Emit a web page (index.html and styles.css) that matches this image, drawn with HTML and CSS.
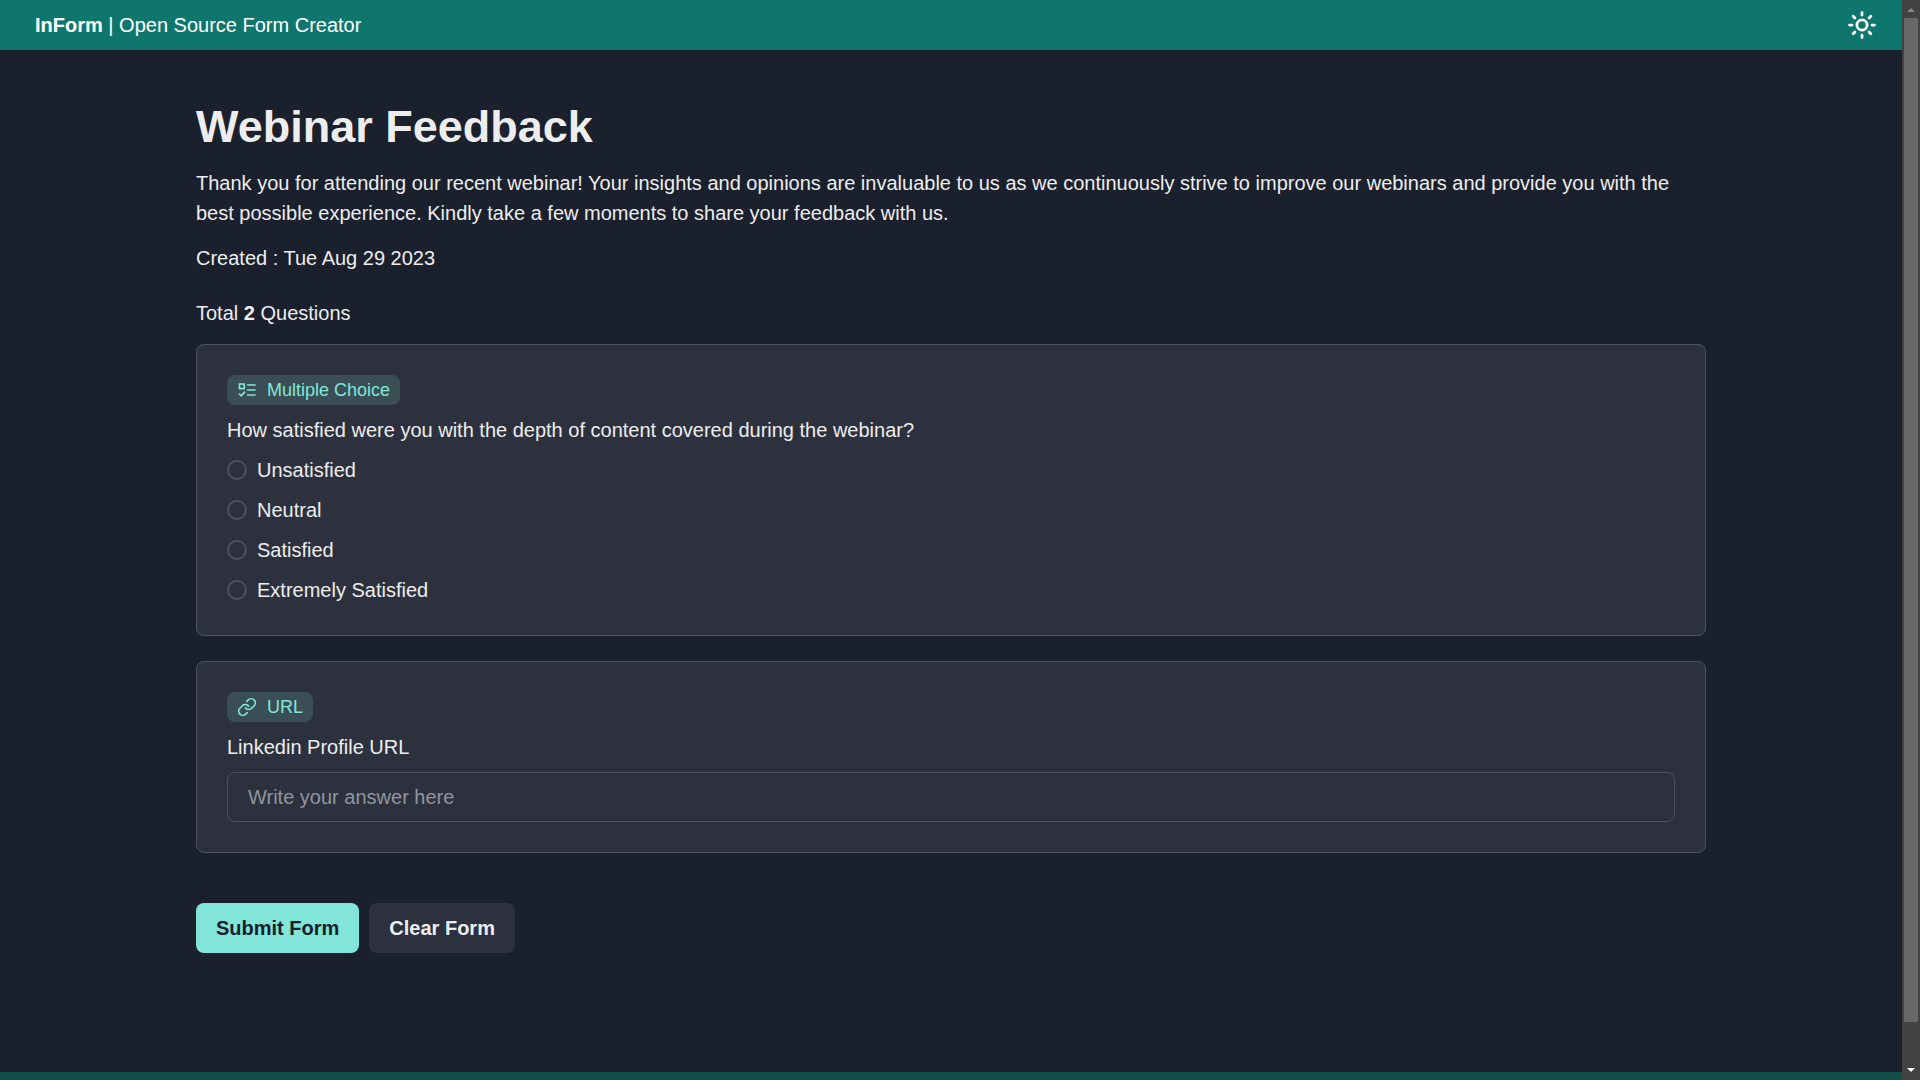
FILE: index.html
```html
<!DOCTYPE html>
<html lang="en">
<head>
<meta charset="utf-8">
<title>Webinar Feedback | InForm</title>
<link rel="stylesheet" href="styles.css">
</head>
<body>
<div class="page">
  <header class="topbar">
    <a class="brand" href="#"><b>InForm</b> | Open Source Form Creator</a>
    <button class="theme-toggle" type="button" aria-label="Toggle color mode">
      <svg viewBox="0 0 24 24" fill="none" stroke="currentColor" stroke-width="2.2" stroke-linecap="round" stroke-linejoin="round">
        <circle cx="12" cy="12" r="4.1"/>
        <path d="M12 2v2M12 20v2M4.93 4.93l1.41 1.41M17.66 17.66l1.41 1.41M2 12h2M20 12h2M6.34 17.66l-1.41 1.41M19.07 4.93l-1.41 1.41"/>
      </svg>
    </button>
  </header>
  <main class="content">
    <h1 class="title">Webinar Feedback</h1>
    <p class="description">Thank you for attending our recent webinar! Your insights and opinions are invaluable to us as we continuously strive to improve our webinars and provide you with the best possible experience. Kindly take a few moments to share your feedback with us.</p>
    <p class="created">Created : Tue Aug 29 2023</p>
    <p class="total">Total <b>2</b> Questions</p>
    <form class="form">
      <fieldset class="card" aria-labelledby="q1">
        <span class="tag">
          <svg viewBox="0 0 20 20" fill="none" stroke="currentColor" stroke-width="1.7">
            <path d="M2.5 4h4.7v4.7H2.5zM10 5h8.700M10 10h8.700M10 15h8.700M2 13.500l2.200 2.200 4-4"/>
          </svg>
          Multiple Choice
        </span>
        <p class="question" id="q1">How satisfied were you with the depth of content covered during the webinar?</p>
        <div class="options">
          <label class="option"><input type="radio" name="depth"> Unsatisfied</label>
          <label class="option"><input type="radio" name="depth"> Neutral</label>
          <label class="option"><input type="radio" name="depth"> Satisfied</label>
          <label class="option"><input type="radio" name="depth"> Extremely Satisfied</label>
        </div>
      </fieldset>
      <div class="card">
        <span class="tag">
          <svg viewBox="0 0 24 24" fill="none" stroke="currentColor" stroke-width="2" stroke-linecap="round" stroke-linejoin="round">
            <path d="M10 13a5 5 0 0 0 7.54.54l3-3a5 5 0 0 0-7.07-7.07l-1.72 1.71M14 11a5 5 0 0 0-7.54-.54l-3 3a5 5 0 0 0 7.07 7.07l1.71-1.71"/>
          </svg>
          URL
        </span>
        <label class="question" for="linkedin">Linkedin Profile URL</label>
        <input class="answer" id="linkedin" type="url" placeholder="Write your answer here">
      </div>
      <div class="actions">
        <button class="button button-primary" type="submit">Submit Form</button>
        <button class="button" type="reset">Clear Form</button>
      </div>
    </form>
  </main>
  <footer class="footer"></footer>
</div>
<div class="scrollbar" aria-hidden="true">
  <svg viewBox="0 0 18 18" fill="#868686"><path d="M5 12h8l-4-4z"/></svg>
  <div class="thumb"></div>
  <svg viewBox="0 0 18 18" fill="#fff"><path d="M5 6h8l-4 4z"/></svg>
</div>
</body>
</html>
```

FILE: styles.css
```css
* {
  box-sizing: border-box;
}

body {
  display: flex;
  height: 100vh;
  margin: 0;
  overflow: hidden;
  background: #1a202c;
  color: #ededee;
  font: 20px/30px "Liberation Sans", Arial, sans-serif;
}

h1,
p {
  margin: 0;
}

button,
input {
  font: inherit;
  color: inherit;
}

.page {
  display: flex;
  flex: 1;
  flex-direction: column;
  min-width: 0;
}

.topbar {
  display: flex;
  align-items: center;
  justify-content: space-between;
  padding: 10px 25px 10px 35px;
  background: #0f766e;
  color: #fff;
}

.brand {
  color: inherit;
  text-decoration: none;
}

.theme-toggle {
  display: flex;
  padding: 0;
  border: 0;
  background: none;
}

.theme-toggle svg {
  width: 30px;
  height: 30px;
}

.content {
  flex: 1;
  width: 100%;
  max-width: 1550px;
  margin: 0 auto;
  padding: 50px 20px;
}

.title {
  font-size: 45px;
  line-height: 54px;
}

.description {
  margin-top: 14px;
}

.created {
  margin-top: 15px;
}

.total {
  margin-top: 25px;
}

.form {
  display: flex;
  flex-direction: column;
  gap: 25px;
  margin-top: 16px;
}

.card {
  display: flex;
  flex-direction: column;
  align-items: flex-start;
  gap: 10px;
  min-width: 0;
  margin: 0;
  padding: 30px;
  border: 1px solid #4e525b;
  border-radius: 8px;
  background: #2d313d;
}

.tag {
  display: flex;
  align-items: center;
  gap: 10px;
  height: 30px;
  padding: 0 10px;
  border-radius: 8px;
  background: #3a4e55;
  color: #81e6d9;
  font-size: 18px;
}

.tag svg {
  width: 20px;
  height: 20px;
}

.options {
  display: flex;
  flex-direction: column;
  gap: 10px;
}

.option {
  display: flex;
  align-items: center;
  gap: 10px;
}

.option input {
  width: 20px;
  height: 20px;
  margin: 0;
  border: 2px solid #4e525b;
  border-radius: 50%;
  appearance: none;
}

.option input:checked {
  border: 6px solid #81e6d9;
}

.answer {
  width: 100%;
  height: 50px;
  padding: 0 20px;
  border: 1px solid #4e525b;
  border-radius: 8px;
  background: transparent;
}

.answer::placeholder {
  color: #9095a0;
}

.actions {
  display: flex;
  gap: 10px;
  margin-top: 25px;
}

.button {
  height: 50px;
  padding: 0 20px;
  border: 0;
  border-radius: 8px;
  background: #2d313d;
  font-weight: 700;
}

.button-primary {
  background: #81e6d9;
  color: #1a202c;
}

.footer {
  height: 8px;
  background: #134e4a;
}

.scrollbar {
  display: flex;
  flex-direction: column;
  width: 18px;
  background: #424242;
}

.scrollbar svg {
  height: 18px;
}

.thumb {
  height: 93%;
  margin: 0 2px auto;
  background: #686868;
}
```
